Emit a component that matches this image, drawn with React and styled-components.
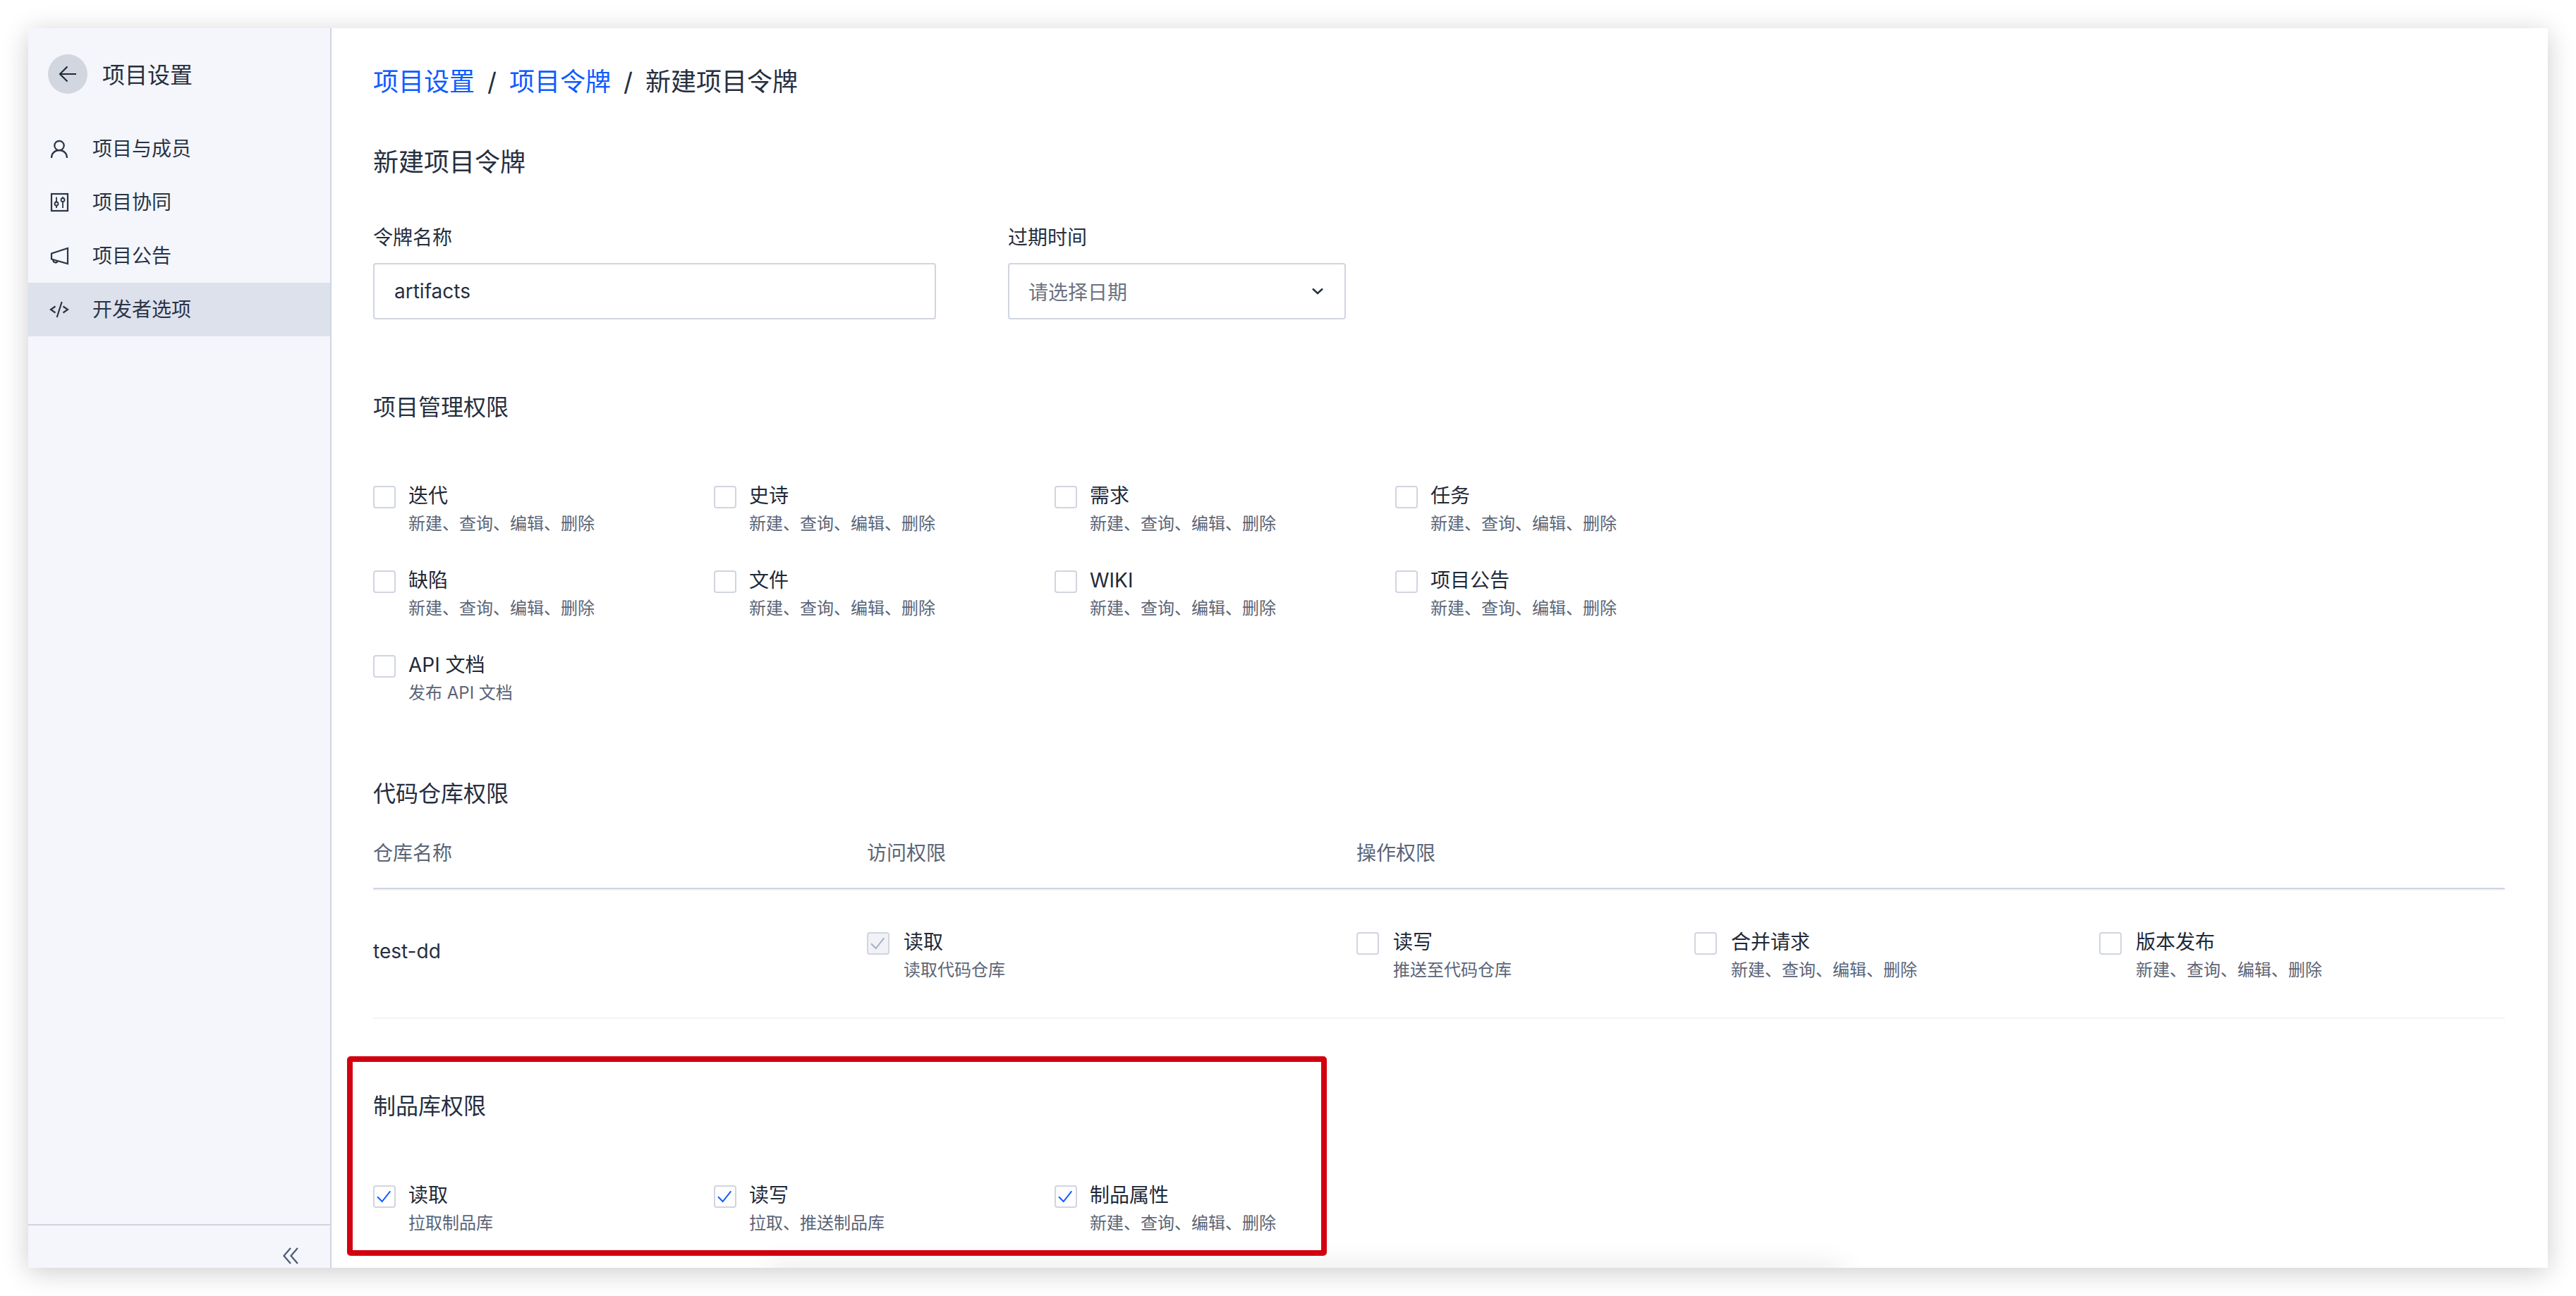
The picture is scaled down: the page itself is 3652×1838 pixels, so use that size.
import React from 'react';
import styled, { createGlobalStyle } from 'styled-components';

const GlobalStyle = createGlobalStyle`
  html, body {
    margin: 0;
    padding: 0;
    background: #fff;
  }
  body {
    font-family: Inter, "Noto Sans CJK SC", sans-serif;
    color: #1f2937;
  }
  * {
    box-sizing: border-box;
  }
`;

const Page = styled.div`
  width: 3652px;
  height: 1838px;
  padding: 40px;
  overflow: hidden;
`;

const Window = styled.div`
  position: relative;
  display: flex;
  width: 3572px;
  height: 1758px;
  background: #fff;
  box-shadow: 0 6px 36px rgba(0, 0, 0, 0.2);
`;

const Sidebar = styled.aside`
  display: flex;
  flex-direction: column;
  flex: none;
  width: 430px;
  background: #f4f6fb;
  border-right: 2px solid #d0d5df;
`;

const SidebarHeader = styled.div`
  display: flex;
  align-items: center;
  gap: 21px;
  padding: 37px 0 0 28px;
  margin-bottom: 40px;
`;

const BackButton = styled.button`
  display: flex;
  align-items: center;
  justify-content: center;
  width: 56px;
  height: 56px;
  padding: 0;
  border: 0;
  border-radius: 50%;
  background: #d1d6df;
  color: #1f2a3c;
`;

const SidebarTitle = styled.span`
  margin-top: 3px;
  font-size: 32px;
  line-height: 44px;
  color: #252f3f;
`;

const NavItem = styled.a`
  display: flex;
  align-items: center;
  gap: 33px;
  height: 76px;
  padding-left: 30px;
  font-size: 28px;
  line-height: 38px;
  color: #2a3445;
  background: ${(p) => (p.$active ? '#dde1ec' : 'transparent')};
`;

const SidebarFooter = styled.div`
  display: flex;
  justify-content: flex-end;
  height: 62px;
  margin-top: auto;
  padding: 31px 45px 0 0;
  border-top: 2px solid #d0d5df;
`;

const Main = styled.main`
  flex: 1;
  min-width: 0;
  padding: 54px 61px 0 59px;
`;

const Breadcrumb = styled.nav`
  display: flex;
  gap: 18px;
  font-size: 36px;
  line-height: 44px;
  color: #252f3f;
`;

const Crumb = styled.a`
  color: ${(p) => (p.$link ? '#0f5bff' : '#252f3f')};
`;

const PageTitle = styled.h1`
  margin: 70px 0 0;
  font-size: 36px;
  font-weight: 400;
  line-height: 44px;
  color: #252f3f;
`;

const FormRow = styled.div`
  display: flex;
  gap: 102px;
  margin-top: 65px;
`;

const Field = styled.div`
  width: ${(p) => p.$width}px;
`;

const FieldLabel = styled.label`
  display: block;
  margin-bottom: 16px;
  font-size: 28px;
  line-height: 40px;
  color: #252f3f;
`;

const TextBox = styled.div`
  display: flex;
  align-items: center;
  justify-content: space-between;
  height: 80px;
  padding: 0 30px 0 ${(p) => (p.$placeholder ? 27 : 28)}px;
  border: 2px solid #d0d5df;
  border-radius: 4px;
  font-size: 28px;
  color: ${(p) => (p.$placeholder ? '#6b7280' : '#252f3f')};
`;

const SectionTitle = styled.h2`
  margin: ${(p) => p.$top}px 0 0;
  font-size: 32px;
  font-weight: 400;
  line-height: 44px;
  color: #252f3f;
`;

const Permission = styled.div`
  display: flex;
  gap: 20px;
  width: ${(p) => (p.$width ? `${p.$width}px` : 'auto')};
`;

const PermissionGrid = styled.div`
  display: grid;
  grid-template-columns: repeat(4, 483px);
  row-gap: 50px;
  margin-top: ${(p) => p.$top}px;

  ${Permission} {
    gap: 18px;
  }
`;

const CheckBox = styled.span`
  display: block;
  flex: none;
  width: 32px;
  height: 32px;
  border: 2px solid #d0d5df;
  border-radius: 4px;
  background: ${(p) => (p.$disabled ? '#f0f2f8' : '#fff')};
  color: ${(p) => (p.$disabled ? '#a7afbe' : '#0f5bff')};
`;

const PermissionText = styled.div`
  display: flex;
  flex-direction: column;
  gap: 10px;
`;

const PermissionName = styled.span`
  font-size: 28px;
  line-height: 28px;
  color: #1f2937;
`;

const PermissionDesc = styled.span`
  font-size: 24px;
  line-height: 32px;
  color: #5b6577;
`;

const TableHead = styled.div`
  display: grid;
  grid-template-columns: 700px 694px 1fr;
  margin-top: 42px;
  padding-bottom: 29px;
  border-bottom: 2px solid #d0d5df;
  font-size: 28px;
  line-height: 40px;
  color: #5b6577;
`;

const TableRow = styled.div`
  display: grid;
  grid-template-columns: 700px 694px 1fr;
  height: 184px;
  padding-top: 59px;
  border-top: 2px solid #f1f3f8;
  border-bottom: 2px solid #f1f3f8;
`;

const RepoName = styled.span`
  margin-top: 7px;
  font-size: 28px;
  line-height: 40px;
  color: #252f3f;
`;

const Operations = styled.div`
  display: flex;
`;

const ArtifactSection = styled.section`
  position: relative;
`;

const Highlight = styled.div`
  position: absolute;
  left: -37px;
  top: -49px;
  width: 1389px;
  height: 283px;
  border: 8px solid #d2000f;
  border-radius: 5px;
  pointer-events: none;
  z-index: 2;
`;

const BottomGlow = styled.div`
  position: absolute;
  left: 1050px;
  bottom: -30px;
  width: 1520px;
  height: 30px;
  box-shadow: 0 0 44px rgba(0, 0, 0, 0.11);
`;

const Clip = styled.div`
  position: absolute;
  inset: 0;
  overflow: hidden;
  pointer-events: none;
`;

const UserIcon = () => (
  <svg width="28" height="28" viewBox="0 0 28 28" fill="none" stroke="currentColor" strokeWidth="2.200">
    <circle cx="14" cy="9.500" r="6.700" />
    <path d="M3 27c0-6.500 4.500-10.800 11-10.800S25 20.500 25 27" />
  </svg>
);

const SlidersIcon = () => (
  <svg width="28" height="28" viewBox="0 0 28 28" fill="none" stroke="currentColor" strokeWidth="2.200">
    <rect x="3" y="2" width="23" height="24" />
    <path d="M10 6.500v6.500M10 19v3M19 6v1.500M19 13.500V22" strokeWidth="1.800" />
    <circle cx="10" cy="16" r="2.500" strokeWidth="1.800" />
    <circle cx="19" cy="10.500" r="2.500" strokeWidth="1.800" />
  </svg>
);

const MegaphoneIcon = () => (
  <svg width="28" height="28" viewBox="0 0 28 28" fill="none" stroke="currentColor" strokeWidth="2.200">
    <path d="M3 10.500 26 3v22L3 18.500z" />
    <path d="M5.500 19.500a3.300 3.300 0 0 0 6.300 1.800" />
  </svg>
);

const CodeIcon = () => (
  <svg width="28" height="28" viewBox="0 0 28 28" fill="none" stroke="currentColor" strokeWidth="2.200">
    <path d="M8.500 9.500 2 14l6.500 4.500M19.500 9.500 26 14l-6.500 4.500M17.700 3l-7 22" />
  </svg>
);

const BackIcon = () => (
  <svg width="26" height="26" viewBox="0 0 26 26" fill="none" stroke="currentColor" strokeWidth="2.200">
    <path d="M25 13H2.500M12.500 2.500 2 13l10.500 10.500" />
  </svg>
);

const CollapseIcon = () => (
  <svg width="22" height="24" viewBox="0 0 22 24" fill="none" stroke="#4b5a70" strokeWidth="2.200">
    <path d="M11 1 1.500 12 11 23M21 1l-9.500 11L21 23" />
  </svg>
);

const ChevronIcon = () => (
  <svg width="16" height="10" viewBox="0 0 16 10" fill="none" stroke="#252f3f" strokeWidth="2.400">
    <path d="M1 1.500 8 8l7-6.500" />
  </svg>
);

const Tick = () => (
  <svg width="28" height="28" viewBox="0 0 28 28" fill="none" stroke="currentColor" strokeWidth="2">
    <path d="M4 14.300 10.700 21 22.300 6.300" />
  </svg>
);

const NAV = [
  { label: '项目与成员', icon: <UserIcon /> },
  { label: '项目协同', icon: <SlidersIcon /> },
  { label: '项目公告', icon: <MegaphoneIcon /> },
  { label: '开发者选项', icon: <CodeIcon />, active: true },
];

const CRUD = '新建、查询、编辑、删除';

const PROJECT_PERMISSIONS = [
  { name: '迭代', desc: CRUD },
  { name: '史诗', desc: CRUD },
  { name: '需求', desc: CRUD },
  { name: '任务', desc: CRUD },
  { name: '缺陷', desc: CRUD },
  { name: '文件', desc: CRUD },
  { name: 'WIKI', desc: CRUD },
  { name: '项目公告', desc: CRUD },
  { name: 'API 文档', desc: '发布 API 文档' },
];

const OPERATIONS = [
  { name: '读写', desc: '推送至代码仓库', width: 479 },
  { name: '合并请求', desc: CRUD, width: 574 },
  { name: '版本发布', desc: CRUD },
];

const ARTIFACT_PERMISSIONS = [
  { name: '读取', desc: '拉取制品库' },
  { name: '读写', desc: '拉取、推送制品库' },
  { name: '制品属性', desc: CRUD },
];

const PermissionItem = ({ name, desc, checked, disabled, width }) => (
  <Permission $width={width}>
    <CheckBox $disabled={disabled}>{checked && <Tick />}</CheckBox>
    <PermissionText>
      <PermissionName>{name}</PermissionName>
      <PermissionDesc>{desc}</PermissionDesc>
    </PermissionText>
  </Permission>
);

const App = () => {
  return (
    <Page>
      <GlobalStyle />
      <Window>
        <Sidebar>
          <SidebarHeader>
            <BackButton>
              <BackIcon />
            </BackButton>
            <SidebarTitle>项目设置</SidebarTitle>
          </SidebarHeader>
          {NAV.map((item) => (
            <NavItem key={item.label} $active={item.active}>
              {item.icon}
              {item.label}
            </NavItem>
          ))}
          <SidebarFooter>
            <CollapseIcon />
          </SidebarFooter>
        </Sidebar>
        <Main>
          <Breadcrumb>
            <Crumb $link>项目设置</Crumb>
            <span>/</span>
            <Crumb $link>项目令牌</Crumb>
            <span>/</span>
            <Crumb>新建项目令牌</Crumb>
          </Breadcrumb>
          <PageTitle>新建项目令牌</PageTitle>
          <FormRow>
            <Field $width={798}>
              <FieldLabel>令牌名称</FieldLabel>
              <TextBox>artifacts</TextBox>
            </Field>
            <Field $width={479}>
              <FieldLabel>过期时间</FieldLabel>
              <TextBox $placeholder>
                请选择日期
                <ChevronIcon />
              </TextBox>
            </Field>
          </FormRow>

          <SectionTitle $top={103}>项目管理权限</SectionTitle>
          <PermissionGrid $top={89}>
            {PROJECT_PERMISSIONS.map((item) => (
              <PermissionItem key={item.name} {...item} />
            ))}
          </PermissionGrid>

          <SectionTitle $top={105}>代码仓库权限</SectionTitle>
          <TableHead>
            <span>仓库名称</span>
            <span>访问权限</span>
            <span>操作权限</span>
          </TableHead>
          <TableRow>
            <RepoName>test-dd</RepoName>
            <PermissionItem name="读取" desc="读取代码仓库" checked disabled />
            <Operations>
              {OPERATIONS.map((item) => (
                <PermissionItem key={item.name} {...item} />
              ))}
            </Operations>
          </TableRow>

          <ArtifactSection>
            <Highlight />
            <SectionTitle $top={102}>制品库权限</SectionTitle>
            <PermissionGrid $top={90}>
              {ARTIFACT_PERMISSIONS.map((item) => (
                <PermissionItem key={item.name} {...item} checked />
              ))}
            </PermissionGrid>
          </ArtifactSection>
        </Main>
        <Clip>
          <BottomGlow />
        </Clip>
      </Window>
    </Page>
  );
};

export default App;
